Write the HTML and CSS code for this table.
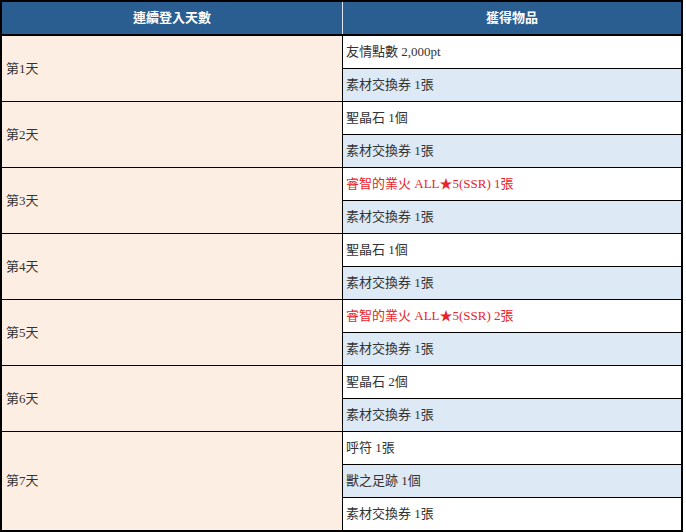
FILE: index.html
```html
<!DOCTYPE html>
<html lang="zh-Hant">
<head>
<meta charset="utf-8">
<link rel="stylesheet" href="styles.css">
</head>
<body>
<table class="bonus">
  <thead>
    <tr><th>連續登入天數</th><th>獲得物品</th></tr>
  </thead>
  <tbody>
    <tr><td class="day" rowspan="2">第1天</td><td class="item">友情點數 2,000pt</td></tr>
    <tr><td class="item alt">素材交換券 1張</td></tr>
    <tr><td class="day" rowspan="2">第2天</td><td class="item">聖晶石 1個</td></tr>
    <tr><td class="item alt">素材交換券 1張</td></tr>
    <tr><td class="day" rowspan="2">第3天</td><td class="item red">睿智的業火 ALL★5(SSR) 1張</td></tr>
    <tr><td class="item alt">素材交換券 1張</td></tr>
    <tr><td class="day" rowspan="2">第4天</td><td class="item">聖晶石 1個</td></tr>
    <tr><td class="item alt">素材交換券 1張</td></tr>
    <tr><td class="day" rowspan="2">第5天</td><td class="item red">睿智的業火 ALL★5(SSR) 2張</td></tr>
    <tr><td class="item alt">素材交換券 1張</td></tr>
    <tr><td class="day" rowspan="2">第6天</td><td class="item">聖晶石 2個</td></tr>
    <tr><td class="item alt">素材交換券 1張</td></tr>
    <tr><td class="day" rowspan="3">第7天</td><td class="item">呼符 1張</td></tr>
    <tr><td class="item alt">獸之足跡 1個</td></tr>
    <tr><td class="item">素材交換券 1張</td></tr>
  </tbody>
</table>
</body>
</html>
```

FILE: styles.css
```css
html, body {
  margin: 0;
  padding: 0;
  background: #ffffff;
}
.bonus {
  border-collapse: collapse;
  width: 683px;
  table-layout: fixed;
  border: 2px solid #000;
  font-family: "Liberation Serif", "Noto Sans CJK TC", serif;
  font-size: 13px;
  color: #333;
}
.bonus th {
  background: #2a5e91;
  color: #fff;
  font-weight: bold;
  height: 32px;
  padding: 0;
  line-height: 32px;
  text-align: center;
  border-bottom: 2px solid #000;
  border-left: 1px solid #dfe8f2;
}
.bonus th:first-child {
  width: 340px;
  border-left: 2px solid #000;
}
.bonus td {
  height: 32px;
  line-height: 32px;
  padding: 0 0 0 3px;
  border: 1px solid #000;
  text-align: left;
  white-space: nowrap;
}
.bonus .day {
  background: #fdeee3;
  border-left: 2px solid #000;
  padding-left: 4px;
}
.bonus .item {
  background: #ffffff;
}
.bonus .item.alt {
  background: #dde9f5;
}
.bonus .red {
  color: #e8232b;
}
```
